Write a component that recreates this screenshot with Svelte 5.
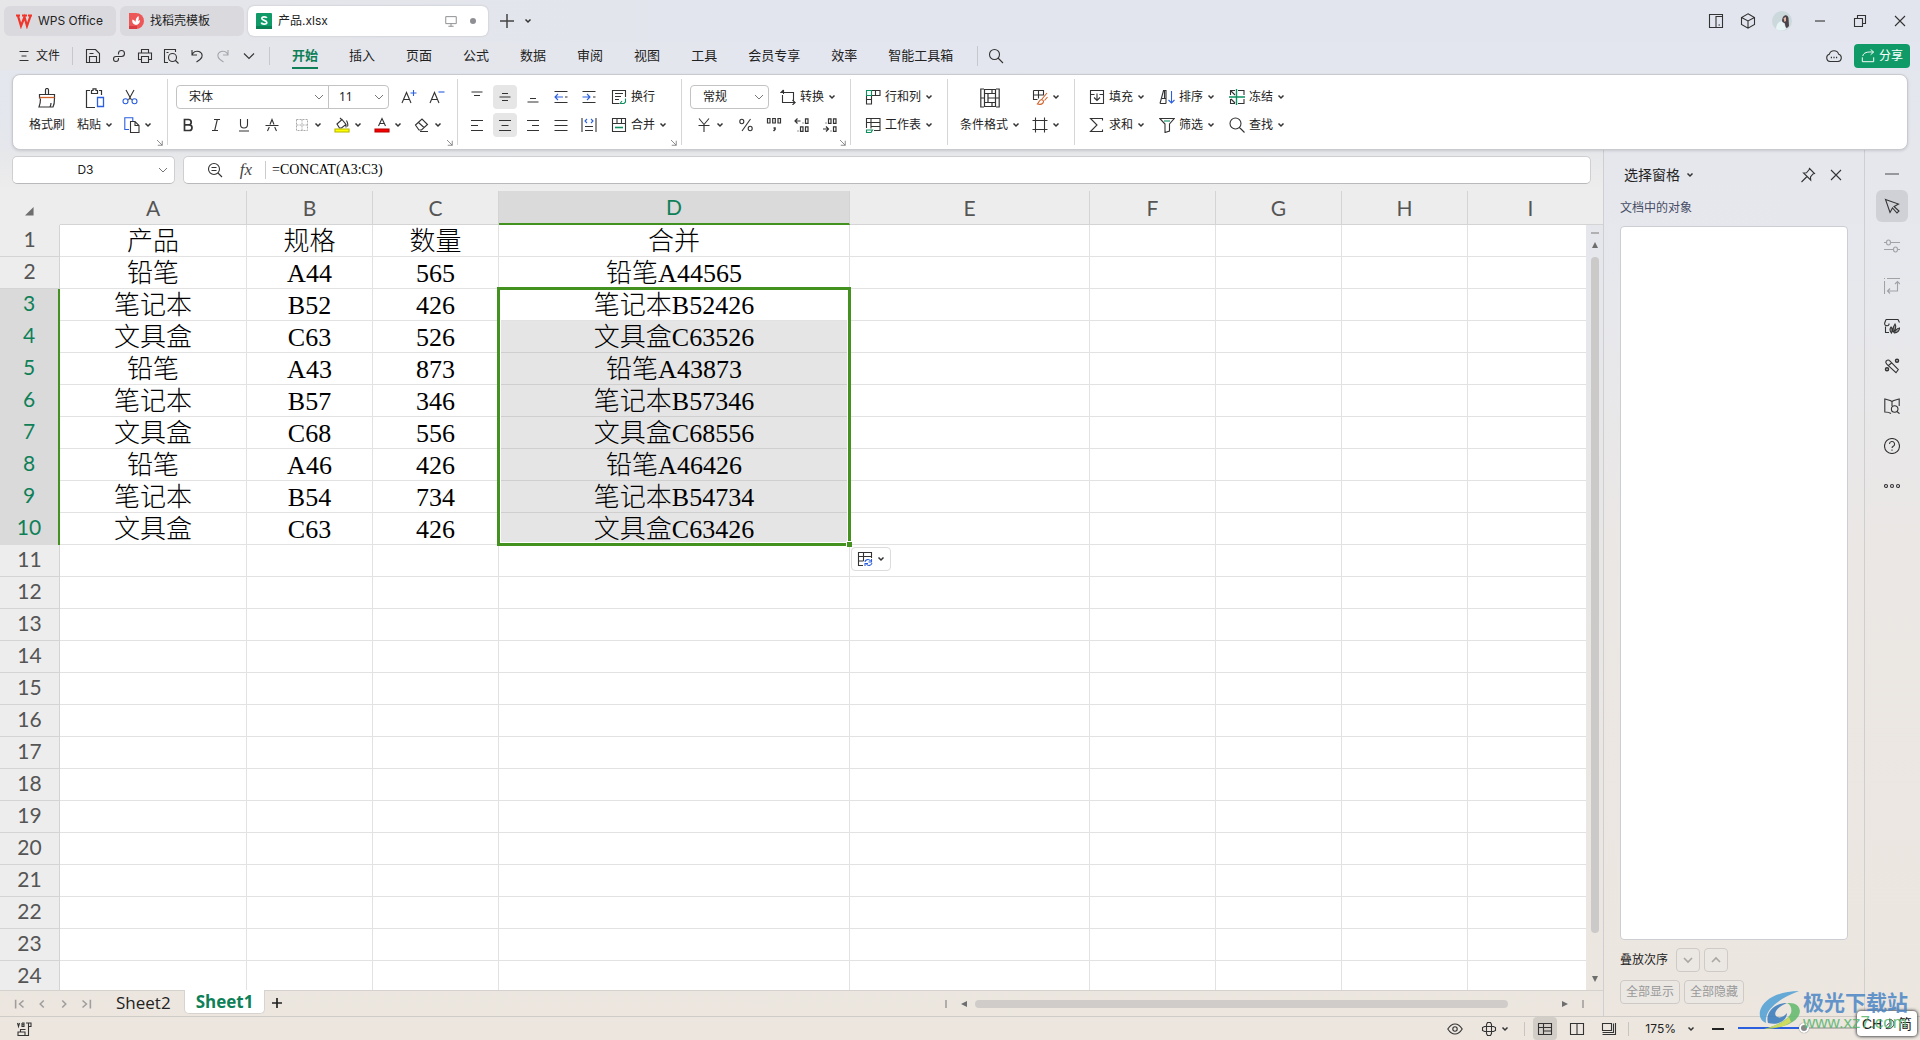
<script>
  // Each icon is a list of [path, stroke?, fill?, width?, dash?] drawn on a 16×16 grid.
  const B = '#2b5fe0';
  const G = '#0e8f5f';
  const O = '#d0622a';
  const icons = {
    menu: [['M3.5 3.5h9M5.5 8h5M3.5 12.5h9']],
    save: [['M1.5 1.5h9l4 4v9h-13zM4.5 14.5v-6h7v6M4.5 5.5h4']],
    link: [['M6 8.5h4.5a3 3 0 1 0-3-3v1M8.5 8.500H5a2.500 2.500 0 1 0 2.500 2.500V10']],
    print: [['M4.500 5V1.500h7V5M4.500 11.500h-3v-6.500h13v6.500h-3M4.500 8.500h7v6h-7z']],
    preview: [['M5 14.500H1.500v-13h11V4M3.500 4.500h2'], ['M13.500 9.500a4 4 0 1 1-8 0 4 4 0 0 1 8 0zM12.500 12.500l3 3']],
    undo: [['M3 2v5h5M3 7c1-3 4-4.500 7-3.500 4 1.500 4 6 1 8L7.500 14']],
    redo: [['M13 2v5H8M13 7c-1-3-4-4.500-7-3.500-4 1.500-4 6-1 8L8.500 14', '#a5a7ad']],
    more: [['M3 5.500l5 5 5-5']],
    search: [['M11.500 6.500a5 5 0 1 1-10 0 5 5 0 0 1 10 0zM10 10l5 5']],
    zoomout: [['M12.500 7a5.500 5.500 0 1 1-11 0 5.500 5.500 0 0 1 11 0zM11 11l4 4M4.500 5.500h5M4.500 8.500h5']],
    layout: [['M1.500 1.500h13v13h-13zM8 3.500h6.500v11H8zM10.500 12h1.500']],
    cube: [['M8 .8l6.500 3.700v7L8 15.200l-6.500-3.700v-7zM1.500 4.500L8 8l6.500-3.500M8 8v7']],
    min: [['M3 8h10']],
    restore: [['M2.500 5.500h8v8h-8zM5.500 5.500v-3h8v8h-3']],
    close: [['M3 3l10 10M13 3L3 13']],
    cloud: [['M4 13.500a3.700 3.700 0 0 1-.7-7.200 4.900 4.900 0 0 1 9.400 0A3.700 3.700 0 0 1 12 13.500z'], ['M4.800 9.500h1.200M7.400 9.500h1.200M10 9.500h1.200', '', '', 1.6]],
    share: [['M1.500 9.500v5h13v-5M2 8c1-4 5-5 12-4.500M11 .5l3.500 3-3.500 3', '#fff']],
    monitor: [['M2 3h12v8H2zM5 14h6M8 11v3', '#8b8c90']],
    cut: [['M4 1l5.500 10M12 1L6.500 11'], ['M6 12.300a2.500 2.500 0 1 1-5 0 2.500 2.500 0 0 1 5 0zM15 12.300a2.500 2.500 0 1 1-5 0 2.500 2.500 0 0 1 5 0z', B]],
    copy: [['M5 12.500H.8V.8h8V4', B], ['M6.500 4.500h4.500l4 4v7H6.500zM11 4.500v4h4']],
    incfont: [['M1 14L5.500 3.500 10 14M2.800 10.500h5.400'], ['M9.500 4h6M12.500 1v6', B]],
    decfont: [['M1 14L5.500 3.500 10 14M2.800 10.500h5.400'], ['M9.500 3h6', B]],
    bold: [['M4.500 2.500h4a2.700 2.700 0 0 1 0 5.400h-4zM4.500 7.900h4.700a2.800 2.800 0 0 1 0 5.600H4.500z', '', '', 1.7]],
    italic: [['M6 2.500h6M4 13.500h6M9.300 2.500L6.700 13.500']],
    underline: [['M4.500 2v5.500a3.500 3.500 0 0 0 7 0V2M3 14h10']],
    strike: [['M3.500 14l1.800-4M12.500 14L10.700 10M6 7.500L8 2.500l2 5M1.500 8.500h13']],
    borders: [['M2.500 2.500h11v11h-11zM8 2.500v11M2.500 8h11', '#aaa', '', 1, '2 1']],
    fill: [['M3 7l5-4.500 4 5-4.500 3.500h-2zM6 1l2 2M12.500 3.500c1 2 2 4 1 6M12 8v2.500'], ['M1 12h14v3H1z', '#b5b500', '#ffff00']],
    fontcolor: [['M4.500 9L8 1.500 11.500 9M5.700 6.500h4.600'], ['M1 12h14v3H1z', '#b80000', '#f40000']],
    eraser: [['M1.500 8L8 2l5.500 5.500-6 5.500H5zM4.500 5.500L10 10.500M6 14.500h8']],
    top: [['M2.500 3h11M5 6.500h6']],
    middle: [['M5 4.500h6M2.500 8h11M5 11.500h6']],
    bottom: [['M5 9.500h6M2.500 13h11']],
    left: [['M2 3.500h12M2 8.500h7M2 13.500h12']],
    center: [['M2 3.500h12M4.500 8.500h7M2 13.500h12']],
    right: [['M2 3.500h12M7 8.500h7M2 13.500h12']],
    justify: [['M1.500 3.500h13M1.500 8.500h13M1.500 13.500h13']],
    outdent: [['M1.500 2.500h13M1.500 13.500h13M12 8h2.500'], ['M10 8H2M5 5L2 8l3 3', B]],
    indent: [['M1.500 2.500h13M1.500 13.500h13M12 8h2.500'], ['M1.500 8H9M6 5l3 3-3 3', B]],
    distribute: [['M1 1v14M15 1v14M4 9.500h8M4 13.500h8'], ['M6 2L4 4l2 2M10 2l2 2-2 2', B]],
    wrap: [['M14.500 8V1.500h-13v13h7M4 4.500h8M4 7.500h6M4 10.500h4'], ['M14.500 9.500v3.500l-1.500 1.500h-4M11 12l-2 2.500', G]],
    merge: [['M1.500 1.500h13v13h-13zM1.500 6.500h13M6 1.500v5M10.500 1.500v5'], ['M4 10.500h8', G, '', 1.6]],
    convert: [['M3.500 1L1 3.500h12.500v8M3.500 1v4M2.500 6v7.500H15L12.500 11M12.500 16l2.500-2.500']],
    yen: [['M3 1.500l5 6 5-6M2.500 8.500h11M8 7.500V15']],
    percent: [['M12.500 2l-8.500 12'], ['M5.800 4.500a2 2.200 0 1 1-4 0 2 2.200 0 0 1 4 0zM14.200 11.500a2 2.200 0 1 1-4 0 2 2.200 0 0 1 4 0z']],
    thousands: [['M1.500 1.500h2.500v4.500H1.500zM6.700 1.500h2.600v4.500H6.700zM12 1.500h2.500v4.500H12z', '', '', 1.2], ['M7.500 11h1.500v1.500l-1.500 1.500', '', '', 1.5]],
    incdec: [['M6.500 4H1M3.500 1.500L1 4l2.500 2.500M8.500 6h1M11.500 1.800h2.500v4.500h-2.500zM3.500 14h1M6.500 9.800H9v4.500H6.500zM11.500 9.800H14v4.500h-2.500z', '', '', 1.2]],
    decdec: [['M1 12h5.500M4 9.500L6.500 12 4 14.500M8.500 14h1M11.500 9.800h2.500v4.500h-2.500zM3.500 6h1M6.500 1.800H9v4.500H6.500zM11.500 1.800H14v4.500h-2.500z', '', '', 1.2]],
    rowcol: [['M6.500 1.500h8.500v5H6.500M10.500 1.500v5M1.500 7v8h5V7M1.500 10.500h5'], ['M1.500 1.500h5v5h-5z', G]],
    worksheet: [['M1.500 11V1.500h13.500v12H9M1.500 5.500h13.500M6 1.500v10M6 9.500h9'], ['M1.500 13h6l-1.500 2.500h-4.500z', G]],
    cellstyle: [['M1.500 1.500h10v5M1.500 1.500v9h4M1.500 6h10M6.500 1.500v8'], ['M15 4l-5 6M15.500 8l-3 3.500M9.500 10.500c2 .5 2.500 2 1.500 3.500-1.500 1.500-4 1.500-5.500 1 1.500-1.500 1.500-4 4-4.500z', O]],
    frame: [['M3.500 .5v15M12.500 .5v15M.5 3.500h15M.5 12.500h15']],
    filldown: [['M1.500 1.500h13v13h-13zM1.500 5.500h4M10.500 5.500h4M8 4.500v7M5 8.500l3 3 3-3']],
    sort: [['M1 14.500L4.500 1.500h2.500v13M3 9.500h4M1 14.500h6M5.500 1.500v8'], ['M12.500 2v12M9.500 11l3 3 3-3', B]],
    freeze: [['M1.500 6V1.500H6M1.500 10v4.500H6M9 1.500h6V6M9 14.500h6V10M2 2l4 4M2 10l4 4'], ['M0 8h16M7.500 0v16', G, '', 1.4]],
    sum: [['M13.500 3.500v-2h-12L8 8l-6.500 6.500h12v-2']],
    filter: [['M.8 1.500h14.400L10.500 7v7l-4.500 1.500V7z'], ['M5 4h6', G]],
    find: [['M12 6.500a5.500 5.500 0 1 1-11 0 5.500 5.500 0 0 1 11 0zM10.500 10.500l5 5']],
    launcher: [['M4 4l7 7M11 5v6H5', '#777']],
    pin: [['M9.500 1.500l5 5-1.500 .5-2.500 3 .2 3L3.500 6l3-.2 2.500-3zM7 9.500l-5.500 5.500']],
    cursor: [['M1.500 1.500l13 4.500-4.500 2.500 5 4.500-2 2-4.500-5-2.500 4.500z']],
    sliders: [['M0 4.500h2.500M6.500 4.500H16M0 11.500h9.500M13.500 11.500H16M6.500 4.500a2 2.500 0 1 1-4 0 2 2.500 0 0 1 4 0zM13.500 11.500a2 2.500 0 1 1-4 0 2 2.500 0 0 1 4 0z', '#a0a2a7']],
    resize: [['M3 .5h13M.5 3v13M0 .5h1M13.500 3.500v9.500H4M11 6l2.500-2.500L16 6M6 10.500L3.500 13 6 15.500', '#a0a2a7']],
    shop: [['M5 14.500H1.500V8.500M2 1.500L.7 5C0 8 4 8.500 5 6.500v-1M2 1.500h12l1.500 3'], ['M7.500 15c-2-2-1.500-4.500-.5-6 1.500 1.500 1.500 4 .5 6zM8.800 13c0-3 1-5.500 2.200-7 1.200 2 .8 5-1.500 8zM10.500 15c.5-2.500 2.500-4.500 5-5 0 2.500-2 5-5 5z', '', '#9a9b9e']],
    wand: [['M1.800 4.500a2.200 2.200 0 0 1 4-1.500l8.500 8.500-2.300 3.200L3 6.500zM4.500 7.500l3-2.500'], ['M14.500 2.800a1.500 1.500 0 1 1-3 0 1.500 1.500 0 0 1 3 0zM4.500 11.200a1.500 1.500 0 1 1-3 0 1.500 1.500 0 0 1 3 0z', '', '', 1.5]],
    book: [['M8 3.500C6 2 4 2 .8 1v13C3 14 5 14 7 15.500M8 3.500C10 2 12 2 15.200 1v7M8 3.500V8'], ['M14 11a3.300 3.300 0 1 1-6.600 0 3.300 3.300 0 0 1 6.600 0zM13 13.500l2.500 2.200']],
    help: [['M15.500 8a7.500 7.500 0 1 1-15 0 7.500 7.500 0 0 1 15 0zM5.500 6a2.500 2.500 0 1 1 3.700 2.200C8.300 8.800 8 9 8 10M8 11.500v1.200']],
    dots: [['M3.500 8a1.500 1.500 0 1 1-3 0 1.500 1.500 0 0 1 3 0zM9.500 8a1.500 1.500 0 1 1-3 0 1.500 1.500 0 0 1 3 0zM15.500 8a1.500 1.500 0 1 1-3 0 1.500 1.500 0 0 1 3 0z']],
    macro: [['M1.500 2l1 3.500 1-3.500M6 2v3.500h2V2H6M6 3.700h2M10 2h5v3.500h-2.500M12.500 2v12.500H2V11h7v3M4.500 11V8.500h5']],
    eye: [['M.8 8C3 4.500 5.500 3 8 3s5 1.500 7.200 5c-2.200 3.500-4.700 5-7.200 5S3 11.500.8 8z'], ['M10.200 8a2.200 2.200 0 1 1-4.400 0 2.200 2.200 0 0 1 4.400 0z']],
    cross: [['M5.500 5.500h5v5h-5zM5.500 3.500l1-2h3l1 2v2M5.500 5.500v-2M5.500 10.500v2l1 2h3l1-2v-2M5.500 5.500h-2l-2 1v3l2 1h2M10.500 5.500h2l2 1v3l-2 1h-2']],
    normal: [['M1.500 2.500h13v11h-13zM1.500 6.500h13M6.500 2.500v11M6.500 10h8']],
    page: [['M1.500 2.500h13v11h-13zM8 2.500v11']],
    reading: [['M1.500 2.500h9v7h-9z'], ['M14.500 2v11.500H1.500M12.500 2.500v9h-11']],
    pasteopt: [['M6 14.500H1.500v-13h13V7M1.500 5.500h13M1.500 10h5M6.500 1.500V10'], ['M8 11c0-2.500 4-3.500 5.500-1M14.500 8v3h-3M15 12c-.5 2.500-4 3.500-5.500 1M8 15v-2.500h3', B]],
    first: [['M3 3v10M12 4L7.500 8l4.500 4', '#a09e9c', '', 1.8]],
    prev: [['M10 4L6 8l4 4', '#a09e9c', '', 1.8]],
    next: [['M6 4l4 4-4 4', '#a09e9c', '', 1.8]],
    last: [['M13 3v10M4 4l4.500 4L4 12', '#a09e9c', '', 1.8]],
    up: [['M4 10l4-4 4 4', '#a9a6a3', '', 1.6]],
    down: [['M4 6l4 4 4-4', '#a9a6a3', '', 1.6]]
  };

  const menus = ['开始', '插入', '页面', '公式', '数据', '审阅', '视图', '工具', '会员专享', '效率', '智能工具箱'];
  const quick = [['save', '保存'], ['link', '输出'], ['print', '打印'], ['preview', '打印预览'], ['undo', '撤销'], ['redo', '恢复'], ['more', '更多命令']];
  const cols = ['A', 'B', 'C', 'D', 'E', 'F', 'G', 'H', 'I'];
  const data = [
    ['产品', '规格', '数量', '合并'],
    ['铅笔', 'A44', '565', '铅笔A44565'],
    ['笔记本', 'B52', '426', '笔记本B52426'],
    ['文具盒', 'C63', '526', '文具盒C63526'],
    ['铅笔', 'A43', '873', '铅笔A43873'],
    ['笔记本', 'B57', '346', '笔记本B57346'],
    ['文具盒', 'C68', '556', '文具盒C68556'],
    ['铅笔', 'A46', '426', '铅笔A46426'],
    ['笔记本', 'B54', '734', '笔记本B54734'],
    ['文具盒', 'C63', '426', '文具盒C63426']
  ];
  const rows = Array.from({ length: 24 }, (_, i) => i + 1);
  const rail = [['sliders', '属性'], ['resize', '对象'], ['shop', '稻壳资源'], ['wand', '工具'], ['book', '查找'], ['help', '帮助'], ['dots', '更多']];
  const inRange = (n) => n >= 3 && n <= 10;
  let zoom = $state(43);
</script>

{#snippet icon(name)}
  <svg class="icon" viewBox="0 0 16 16" aria-hidden="true">
    {#each icons[name] as [d, stroke, fill, width, dash]}
      <path {d} stroke={stroke || 'currentColor'} fill={fill || 'none'} stroke-width={width || 1.1} stroke-dasharray={dash || null} />
    {/each}
  </svg>
{/snippet}

{#snippet chev()}
  <svg class="chev" viewBox="0 0 8 8" aria-hidden="true"><path d="M1.500 2.500L4 5l2.500-2.500" fill="none" stroke="currentColor" stroke-width="1.500" /></svg>
{/snippet}

{#snippet wide()}
  <svg class="wide" viewBox="0 0 10 8" aria-hidden="true"><path d="M1 2l4 4 4-4" fill="none" stroke="#777" /></svg>
{/snippet}

{#snippet tool(name, label, on = false)}
  <button class="tool" class:on aria-label={label}>{@render icon(name)}</button>
{/snippet}

{#snippet drop(name, label)}
  <button class="drop" aria-label={label}>{@render icon(name)}{@render chev()}</button>
{/snippet}

{#snippet labelled(name, label, menu = true)}
  <button class="labelled">{@render icon(name)}<span>{label}</span>{#if menu}{@render chev()}{/if}</button>
{/snippet}

{#snippet launcher()}
  <button class="launcher" aria-label="更多设置">{@render icon('launcher')}</button>
{/snippet}

<div class="app">
  <header class="title">
    <div class="tabs">
      <button class="tab home">
        <svg class="logo" viewBox="0 0 16 16" aria-hidden="true"><path d="M0 2.500h4M12 2.500h4M2 3l3 10L8.500 4l2.500 9L14.500 3M6 2.500h5" fill="none" stroke="#f0362b" stroke-width="2.200" /></svg>
        WPS Office
      </button>
      <button class="tab docer">
        <svg class="logo" viewBox="0 0 16 16" aria-hidden="true"><path d="M1 0h7a8 8 0 0 1 0 16H1z" fill="#ee5757" /><path d="M1 13h8v3H1z" fill="#d83d43" /><path d="M8 12C4 11 4 8 4.500 6.500 6 7 7 8 7.500 9 7.500 6.500 8.500 4 10.500 3c.5 2 .5 3.500-.5 5l2-1c0 3-1.500 4.500-4 5z" fill="#fff" /></svg>
        找稻壳模板
      </button>
      <div class="tab file">
        <svg class="logo" viewBox="0 0 16 16" aria-hidden="true"><rect width="16" height="16" rx="1" fill="#109a68" /><path d="M0 13h16v3H0z" fill="#0b8055" /><path d="M10.800 5c-.5-1.500-5-1.700-5 .5 0 2.300 5 1.500 5 4 0 2.200-5 2-5.400 0" fill="none" stroke="#fff" stroke-width="1.700" /></svg>
        <span class="grow">产品.xlsx</span>
        {@render icon('monitor')}
        <i class="dot"></i>
      </div>
      <button class="add" aria-label="新建"><svg viewBox="0 0 14 14" aria-hidden="true"><path d="M7 0v14M0 7h14" stroke="#444" stroke-width="1.500" /></svg></button>
      <button class="plain" aria-label="标签列表">{@render chev()}</button>
    </div>
    <div class="window">
      <button aria-label="分栏">{@render icon('layout')}</button>
      <button aria-label="应用">{@render icon('cube')}</button>
      <button class="user" aria-label="账户">
        <svg class="avatar" viewBox="0 0 20 20" aria-hidden="true"><circle cx="10" cy="10" r="10" fill="#cbd9dc" /><path d="M4 18c0-5 3-8 7-8l3 8c-3 2-7 2-10 0z" fill="#e8f3f5" /><path d="M11 6c2-3 5-2 5.500 1l.5 8-2 2c-1 0-2-2-2-4.500L10.500 11c-1-1 0-4 .5-5z" fill="#4a4248" /><path d="M11.500 7l2.500-1v4l-1.500 1z" fill="#e3b9a8" /></svg>
      </button>
      <button class="sys" aria-label="最小化">{@render icon('min')}</button>
      <button class="sys" aria-label="还原">{@render icon('restore')}</button>
      <button class="sys" aria-label="关闭">{@render icon('close')}</button>
    </div>
  </header>

  <nav class="menubar">
    <button class="filemenu">{@render icon('menu')}文件</button>
    <div class="quick">
      {#each quick as [name, label]}
        <button aria-label={label}>{@render icon(name)}</button>
      {/each}
    </div>
    <div class="menus">
      {#each menus as m, i}
        <button class:active={i === 0}>{m}</button>
      {/each}
    </div>
    <button class="find" aria-label="搜索">{@render icon('search')}</button>
    <button class="cloud" aria-label="云同步">{@render icon('cloud')}</button>
    <button class="share">{@render icon('share')}分享</button>
  </nav>

  <section class="ribbon" aria-label="开始">
    <div class="group clip">
      <button class="big">
        <svg class="large" viewBox="0 0 20 20" aria-hidden="true"><path d="M8.500 6.500V2a1.500 1.500 0 0 1 3 0v4.500M2.500 10.500v-4h15v4M3.500 10.500c0 3-.5 6-1.500 8.500h14c1-2 1.500-5 1.500-8.500M13 19c.5-1 1-2 1-4" fill="none" stroke="#333" stroke-width="1.200" /><path d="M2.500 9.500h15" stroke="#d0622a" stroke-width="1.300" /></svg>
        <span>格式刷</span>
      </button>
      <button class="big">
        <svg class="large" viewBox="0 0 20 20" aria-hidden="true"><path d="M5 2.500H1.500v17H10M14 2.500h2.500V7M6.500 5.500V2.500H8V.8h3v1.700h1.500v3z" fill="none" stroke="#333" stroke-width="1.200" /><path d="M12.500 9.500h6v9h-6z" fill="none" stroke="#2b5fe0" stroke-width="1.300" /></svg>
        <span>粘贴{@render chev()}</span>
      </button>
      <div class="stack">
        <div class="line">{@render tool('cut', '剪切')}</div>
        <div class="line">{@render drop('copy', '复制')}</div>
      </div>
      {@render launcher()}
    </div>

    <div class="group font">
      <div class="stack">
        <div class="line">
          <div class="combo family"><select aria-label="字体"><option>宋体</option></select>{@render wide()}</div>
          <div class="combo size"><select aria-label="字号"><option>11</option></select>{@render wide()}</div>
          {@render tool('incfont', '增大字号')}{@render tool('decfont', '减小字号')}
        </div>
        <div class="line">
          {@render tool('bold', '加粗')}{@render tool('italic', '倾斜')}{@render tool('underline', '下划线')}{@render tool('strike', '删除线')}
          {@render drop('borders', '边框')}{@render drop('fill', '填充颜色')}{@render drop('fontcolor', '字体颜色')}{@render drop('eraser', '清除')}
        </div>
      </div>
      {@render launcher()}
    </div>

    <div class="group align">
      <div class="stack">
        <div class="line">
          {@render tool('top', '顶端对齐')}{@render tool('middle', '垂直居中', true)}{@render tool('bottom', '底端对齐')}{@render tool('outdent', '减少缩进')}{@render tool('indent', '增加缩进')}
          {@render labelled('wrap', '换行', false)}
        </div>
        <div class="line">
          {@render tool('left', '左对齐')}{@render tool('center', '水平居中', true)}{@render tool('right', '右对齐')}{@render tool('justify', '两端对齐')}{@render tool('distribute', '分散对齐')}
          {@render labelled('merge', '合并')}
        </div>
      </div>
      {@render launcher()}
    </div>

    <div class="group number">
      <div class="stack">
        <div class="line">
          <div class="combo format"><select aria-label="数字格式"><option>常规</option></select>{@render wide()}</div>
          {@render labelled('convert', '转换')}
        </div>
        <div class="line">
          {@render drop('yen', '货币')}
          <div class="digits">{@render tool('percent', '百分比')}{@render tool('thousands', '千位分隔')}{@render tool('incdec', '增加小数位')}{@render tool('decdec', '减少小数位')}</div>
        </div>
      </div>
      {@render launcher()}
    </div>

    <div class="group sheetops">
      <div class="stack">
        <div class="line">{@render labelled('rowcol', '行和列')}</div>
        <div class="line">{@render labelled('worksheet', '工作表')}</div>
      </div>
    </div>

    <div class="group style">
      <button class="big">
        <svg class="large" viewBox="0 0 20 20" aria-hidden="true"><path d="M4 1H.8v18H4M16 1h3.200v18H16M4.500 1v18M15.500 1v18M4.500 1.500h11M4.500 18.500h11M4.500 5.500h11M4.500 14.500h11M8 10h7.500M.8 10h3.700M15.500 10h3.700M8 5.500v9M12 1.500v4M12 14.500v4" fill="none" stroke="#333" stroke-width="1.200" /></svg>
        <span>条件格式{@render chev()}</span>
      </button>
      <div class="stack">
        <div class="line">{@render drop('cellstyle', '单元格样式')}</div>
        <div class="line">{@render drop('frame', '表格样式')}</div>
      </div>
    </div>

    <div class="group edit">
      <div class="stack">
        <div class="line">{@render labelled('filldown', '填充')}{@render labelled('sort', '排序')}{@render labelled('freeze', '冻结')}</div>
        <div class="line">{@render labelled('sum', '求和')}{@render labelled('filter', '筛选')}{@render labelled('find', '查找')}</div>
      </div>
    </div>
  </section>

  <main>
    <section class="work">
      <div class="formulabar">
        <div class="namebox"><input aria-label="名称框" value="D3" />{@render wide()}</div>
        <div class="formula">
          <button aria-label="浏览公式">{@render icon('zoomout')}</button>
          <button class="fx" aria-label="插入函数">fx</button>
          <input aria-label="编辑栏" value="=CONCAT(A3:C3)" />
        </div>
      </div>

      <div class="sheet">
        <div class="viewport">
          <table>
            <colgroup>
              <col class="w-head" />
              {#each cols as c}<col class="w-{c}" />{/each}
            </colgroup>
            <thead>
              <tr>
                <th class="corner" aria-label="全选"><svg viewBox="0 0 10 10" aria-hidden="true"><path d="M9.500 0v9.500H0z" fill="#6e6e6e" /></svg></th>
                {#each cols as c}<th class:hot={c === 'D'} scope="col">{c}</th>{/each}
              </tr>
            </thead>
            <tbody>
              {#each rows as n}
                <tr>
                  <th scope="row" class:hot={inRange(n)}>{n}</th>
                  {#each cols as c, i}
                    <td class:picked={c === 'D' && n > 3 && n <= 10} class:anchor={c === 'D' && n === 3}>
                      {data[n - 1]?.[i] ?? ''}
                      {#if c === 'D' && n === 3}
                        <span class="selection">
                          <button class="pasteopt" aria-label="粘贴选项">{@render icon('pasteopt')}{@render chev()}</button>
                        </span>
                      {/if}
                    </td>
                  {/each}
                </tr>
              {/each}
            </tbody>
          </table>
        </div>
        <div class="vscroll">
          <i class="split"></i>
          <svg viewBox="0 0 6 6" aria-hidden="true"><path d="M3 0l3 6H0z" fill="#6e6e6e" /></svg>
          <div class="vtrack"><i></i></div>
          <svg viewBox="0 0 6 6" aria-hidden="true"><path d="M3 6l3-6H0z" fill="#6e6e6e" /></svg>
        </div>
      </div>

      <div class="sheettabs">
        <div class="pager">
          <button aria-label="第一个">{@render icon('first')}</button>
          <button aria-label="上一个">{@render icon('prev')}</button>
          <button aria-label="下一个">{@render icon('next')}</button>
          <button aria-label="最后一个">{@render icon('last')}</button>
        </div>
        <button class="sheettab">Sheet2</button>
        <button class="sheettab current">Sheet1</button>
        <button class="newsheet" aria-label="新建工作表"><svg viewBox="0 0 10 10" aria-hidden="true"><path d="M5 0v10M0 5h10" stroke="#222" stroke-width="1.700" /></svg></button>
        <div class="hscroll">
          <i class="grip"></i>
          <svg viewBox="0 0 6 6" aria-hidden="true"><path d="M0 3l6-3v6z" fill="#6e6e6e" /></svg>
          <div class="htrack"><i></i></div>
          <svg viewBox="0 0 6 6" aria-hidden="true"><path d="M6 3L0 0v6z" fill="#6e6e6e" /></svg>
          <i class="grip"></i>
        </div>
      </div>
    </section>

    <aside class="panel">
      <div class="panelhead">
        <button class="paneltitle">选择窗格{@render chev()}</button>
        <button aria-label="固定">{@render icon('pin')}</button>
        <button aria-label="关闭窗格">{@render icon('close')}</button>
      </div>
      <p>文档中的对象</p>
      <div class="objects"></div>
      <div class="order">
        <span>叠放次序</span>
        <button aria-label="下移">{@render icon('down')}</button>
        <button aria-label="上移">{@render icon('up')}</button>
      </div>
      <div class="order">
        <button class="text">全部显示</button>
        <button class="text">全部隐藏</button>
      </div>
    </aside>

    <aside class="rail">
      <i></i>
      <button class="on" aria-label="选择">{@render icon('cursor')}</button>
      {#each rail as [name, label]}
        <button aria-label={label}>{@render icon(name)}</button>
      {/each}
    </aside>
  </main>

  <footer class="status">
    <button class="macro" aria-label="宏">{@render icon('macro')}</button>
    <button class="view" aria-label="护眼模式">{@render icon('eye')}</button>
    <button class="drop" aria-label="阅读模式">{@render icon('cross')}{@render chev()}</button>
    <i class="bar"></i>
    <button class="view on" aria-label="普通视图">{@render icon('normal')}</button>
    <button class="view" aria-label="分页预览">{@render icon('page')}</button>
    <button class="view" aria-label="阅读版式">{@render icon('reading')}</button>
    <i class="bar"></i>
    <button class="percent">175%{@render chev()}</button>
    <button class="minus" aria-label="缩小"><i></i></button>
    <input class="zoom" type="range" aria-label="缩放" min="0" max="100" bind:value={zoom} />
  </footer>

  <div class="ime">
    <span>CH</span>
    <svg viewBox="0 0 12 14" aria-hidden="true"><path d="M5 1c5 1 7 5 5 8-2 4-7 4-9 3 4 0 7-4 4-11zM2 9l3-3" fill="none" stroke="#222" stroke-width="1.200" /></svg>
    <span>简</span>
  </div>
  <div class="mark">
    <svg viewBox="0 0 44 40" aria-hidden="true">
      <path d="M40 1C20 1 4 9 1 21c-1 6 1 10 6 12-2-13 12-24 33-32z" fill="#4e9fd6" />
      <path d="M9 33c-3-10 6-20 19-20-8 3-14 9-11 13 3 3 8 1 11-3 0 7-8 13-19 10z" fill="#3579bd" />
      <path d="M28 13c10-1 15 5 12 12C36 34 22 38 5 39c14-4 24-9 27-16 1-4 0-8-4-10z" fill="#5fb96a" />
      <path d="M5 39c12-3 20-7 25-12l2 5c-7 5-16 7-27 7z" fill="#c9d84a" />
    </svg>
    <div><b>极光下载站</b><em>www.xz7.com</em></div>
  </div>
</div>

<style>
  :global(body) { margin: 0; }
  .app {
    --ink: #333;
    --green: #0e8058;
    position: relative;
    display: flex;
    flex-direction: column;
    height: 100vh;
    overflow: hidden;
    color: #222;
    font: 12px/16px "Noto Sans", "Noto Sans CJK SC", sans-serif;
    background: linear-gradient(to bottom, #e3e6ee 0, #e7e8ec 30%, #ebe7e4 56%, #ece6df 100%);
  }
  button, input, select {
    font: inherit;
    color: inherit;
    background: none;
    border: 0;
    padding: 0;
    margin: 0;
    outline: 0;
    border-radius: 0;
  }
  button {
    display: flex;
    align-items: center;
    justify-content: center;
    flex: none;
    white-space: nowrap;
  }
  select { appearance: none; }
  input { min-width: 0; }
  .icon { width: 16px; height: 16px; flex: none; color: var(--ink); }
  .chev { width: 8px; height: 8px; flex: none; color: #333; }
  .wide { width: 10px; height: 8px; flex: none; }

  /* Title bar */
  .title { display: flex; justify-content: space-between; height: 42px; flex: none; font-family: Inter, "Noto Sans CJK SC", sans-serif; background: linear-gradient(to right, #e6e6e9, #e2e5ee 40%); }
  .tabs { display: flex; align-items: center; gap: 4px; padding-left: 4px; }
  .tab {
    display: flex;
    align-items: center;
    justify-content: flex-start;
    box-sizing: border-box;
    height: 30px;
    gap: 6px;
    padding: 0 8px;
    border-radius: 6px;
    background: #dadade;
  }
  .home { width: 112px; padding-left: 12px; }
  .docer { width: 124px; }
  .file { width: 240px; background: #fff; box-shadow: 0 0 2px #b5b6bc; }
  .logo { width: 16px; height: 16px; flex: none; }
  .grow { flex: 1; }
  .file .icon { width: 14px; height: 14px; }
  .dot { width: 6px; height: 6px; margin: 0 4px 0 6px; border-radius: 50%; background: #8e8f93; }
  .add { width: 30px; height: 28px; }
  .add svg { width: 14px; height: 14px; }
  .plain { margin-left: -2px; }
  .window { display: flex; align-items: center; }
  .window button { width: 32px; height: 32px; }
  .window .user { width: 36px; }
  .window .sys { width: 40px; }
  .avatar { width: 20px; height: 20px; }

  /* Menu bar */
  .menubar { display: flex; align-items: center; height: 28px; flex: none; padding-right: 10px; background: linear-gradient(to right, #e6e6e9, #e3e6ee 40%); }
  .filemenu { gap: 4px; margin-left: 16px; }
  .quick { display: flex; gap: 10px; margin-left: 12px; padding: 0 12px; border: solid #c6c8ce; border-width: 0 1px; }
  .quick button { height: 18px; }
  .menus { display: flex; gap: 31px; margin-left: 22px; padding-right: 24px; font-size: 13px; }
  .menus button { height: 26px; border-bottom: 2px solid transparent; }
  .menus .active { font-weight: 700; color: var(--green); border-color: var(--green); }
  .find { padding-left: 10px; height: 20px; border-left: 1px solid #c6c8ce; }
  .cloud { margin-left: auto; }
  .share { width: 56px; height: 24px; gap: 4px; margin-left: 12px; border-radius: 4px; color: #fff; background: #109a68; }
  .share .icon { width: 14px; height: 14px; }

  /* Ribbon */
  .ribbon {
    display: flex;
    box-sizing: border-box;
    height: 76px;
    flex: none;
    margin: 4px 12px 0;
    border: 1px solid #c9cacf;
    border-radius: 8px;
    background: #fff;
    box-shadow: 0 1px 3px #0002;
    position: relative;
    z-index: 1;
  }
  .group { display: flex; position: relative; box-sizing: border-box; margin: 4px 0; padding-top: 6px; border-right: 1px solid #d6d6d6; }
  .group:last-child { border: 0; }
  .clip { width: 155px; padding-left: 13px; }
  .font { width: 290px; padding-left: 6px; }
  .align { width: 224px; padding-left: 5px; }
  .number { width: 169px; padding-left: 6px; }
  .sheetops { width: 97px; padding-left: 6px; }
  .style { width: 127px; padding-left: 12px; }
  .edit { padding-left: 6px; }
  .stack { display: flex; flex-direction: column; gap: 4px; }
  .line { display: flex; height: 24px; }
  .big { flex-direction: column; justify-content: space-between; height: 52px; box-sizing: border-box; padding: 3px 0 4px; }
  .big span { display: flex; align-items: center; gap: 4px; }
  .clip .big { width: 42px; }
  .clip .big + .big { width: 46px; margin-left: 4px; }
  .style .big { width: 60px; margin-right: 4px; }
  .large { width: 20px; height: 20px; }
  .tool { width: 24px; height: 24px; margin: 0 2px; border-radius: 4px; }
  .tool.on { background: #e6e6e6; }
  .drop { width: 40px; gap: 4px; justify-content: flex-start; box-sizing: border-box; padding-left: 8px; }
  .clip .tool { margin: 0; }
  .clip .drop { padding-left: 6px; }
  .labelled { gap: 4px; padding: 0 6px 0 8px; }
  .launcher { position: absolute; right: 1px; bottom: -4px; }
  .launcher .icon { width: 12px; height: 12px; }
  .combo { display: flex; align-items: center; box-sizing: border-box; height: 24px; padding-right: 4px; border: 1px solid #c3c3c3; }
  .combo select { flex: 1; min-width: 0; padding-left: 12px; }
  .family { width: 153px; margin-left: 2px; border-radius: 4px 0 0 4px; }
  .size { width: 61px; margin: 0 6px 0 -1px; border-radius: 0 4px 4px 0; }
  .size select { padding-left: 10px; }
  .format { width: 79px; margin: 0 3px 0 2px; border-radius: 4px; }
  .digits { display: flex; margin-left: 4px; }

  /* Work area */
  main { display: flex; flex: 1; min-height: 0; }
  .work { display: flex; flex-direction: column; flex: 1; min-width: 0; border-right: 1px solid #cfcfd1; }
  .formulabar { display: flex; gap: 8px; flex: none; padding: 6px 12px 7px; background: linear-gradient(#e6e7ea, #ededed); }
  .namebox, .formula { display: flex; align-items: center; box-sizing: border-box; height: 28px; border: 1px solid #cfcfd2; border-bottom-color: #b9b9bb; border-radius: 5px; background: #fff; }
  .namebox { width: 163px; padding-right: 6px; font-family: Inter, sans-serif; }
  .namebox input { flex: 1; text-align: center; }
  .formula { flex: 1; padding-left: 23px; }
  .fx { width: 30px; margin: 0 4px 0 8px; font: italic 17px/20px "Liberation Serif", serif; color: #444; }
  .formula input { flex: 1; padding-left: 6px; border-left: 1px solid #ccc; font: 14px/18px "Liberation Serif", serif; color: #000; }

  .sheet { display: flex; flex: 1; min-height: 0; background: #ededed; }
  .viewport { flex: 1; min-width: 0; overflow: hidden; }
  table { width: calc(100% + 8px); table-layout: fixed; border-spacing: 0; background: #fff; }
  .w-head { width: 60px; }
  .w-A { width: 187px; }
  .w-B, .w-C, .w-F, .w-G, .w-H { width: 126px; }
  .w-D { width: 351px; }
  .w-E { width: 240px; }
  th, td { box-sizing: border-box; height: 32px; padding: 0; text-align: center; border: solid #e2e2e2; border-width: 0 1px 1px 0; }
  th { font: 21px/24px Lato, sans-serif; color: #555; background: #ededed; border-color: #d4d4d4; }
  tbody th { padding-bottom: 4px; }
  thead th { height: 34px; }
  thead .corner { border-color: #ededed; }
  .corner svg { width: 9px; height: 9px; }
  .hot { color: var(--green); background: #dadada; }
  thead .hot { border-bottom: 2px solid #43911f; }
  tbody .hot { border-right: 2px solid #43911f; border-bottom: 0; }
  td { padding-top: 3px; font: 26px/28px "Liberation Serif", "Noto Sans CJK SC", serif; font-weight: 300; color: #000; }
  .picked { background: #e5e5e5; border-bottom-color: #cfcfcf; }
  .anchor { position: relative; }
  .selection { position: absolute; z-index: 1; left: -2px; top: -2px; width: calc(100% - 2px); height: 253px; border: 3px solid #43911f; box-shadow: inset 0 0 0 1px #fff; }
  .selection::after { content: ""; position: absolute; right: -4px; bottom: -4px; width: 5px; height: 5px; background: #43911f; border: solid #fff; border-width: 1px 0 0 1px; }
  .pasteopt { position: absolute; left: calc(100% + 3px); top: calc(100% + 4px); width: 40px; height: 24px; gap: 4px; box-sizing: border-box; border: 1px solid #dcdcdc; border-radius: 4px; background: #fff; }

  .vscroll { display: flex; flex-direction: column; align-items: center; box-sizing: border-box; width: 17px; margin-top: 33px; padding: 7px 0 8px; border-top: 1px solid #d4d4d4; background: linear-gradient(#e5e7ed, #e9e7e5 50%, #ece6e0); }
  .vscroll svg, .hscroll svg { width: 6px; height: 6px; flex: none; }
  .split { width: 8px; height: 2px; margin-bottom: 8px; background: #b0b0b2; }
  .vtrack { flex: 1; padding: 9px 0 0; }
  .vtrack i { display: block; width: 8px; height: 94%; border-radius: 4px; background: #cbcac9; }

  .sheettabs { display: flex; flex: none; height: 25px; border-top: 1px solid #d4d1ce; font: 17px/22px "Open Sans", sans-serif; }
  .pager { display: flex; align-items: center; gap: 6px; padding: 0 12px; }
  .pager .icon { width: 14px; height: 14px; }
  .pager button { width: 16px; }
  .sheettab { height: 24px; padding: 0 11px; }
  .sheettab:not(.current) { padding: 0 13px 0 8px; margin-left: 2px; }
  .current { margin-top: -1px; font-weight: 700; color: var(--green); border: 1px solid #d8d3ce; border-top: 0; border-radius: 0 0 5px 5px; background: #fff; }
  .newsheet { width: 24px; height: 24px; }
  .newsheet svg { width: 10px; height: 10px; }
  .hscroll { display: flex; align-items: center; gap: 14px; width: 639px; margin-left: auto; margin-right: 19px; }
  .grip { width: 2px; height: 8px; background: #b0adab; }
  .htrack { flex: 1; margin: 0 0 0 -6px; }
  .htrack i { display: block; width: 93%; height: 8px; border-radius: 4px; background: #d0ccc9; }

  /* Selection panel */
  .panel { display: flex; flex-direction: column; box-sizing: border-box; width: 261px; flex: none; padding: 12px 16px; border-right: 1px solid #cfcfd1; }
  .panelhead { display: flex; align-items: center; gap: 12px; height: 26px; padding: 0 4px; }
  .panelhead .paneltitle { gap: 6px; margin-right: auto; font-size: 14px; line-height: 20px; }
  .panel p { margin: 12px 0 10px; color: #474d66; }
  .objects { flex: 1; border: 1px solid #cdced4; border-radius: 4px; background: #fff; }
  .order { display: flex; align-items: center; gap: 4px; margin-top: 8px; }
  .order span { margin-right: 4px; }
  .order button { box-sizing: border-box; width: 24px; height: 24px; border: 1px solid #cfcac5; border-radius: 4px; background: #ebe8e4; color: #999; }
  .order .text { width: 60px; }

  .rail { display: flex; flex-direction: column; align-items: center; gap: 8px; box-sizing: border-box; width: 55px; flex: none; padding: 23px 1px 0 0; }
  .rail i { width: 14px; height: 2px; margin-bottom: 7px; background: #97989c; }
  .rail button { width: 32px; height: 32px; border-radius: 6px; }
  .rail .on { background: #d0d1d6; }

  /* Status bar */
  .status { display: flex; flex: none; box-sizing: border-box; height: 24px; border-top: 1px solid #cfcbc7; padding-right: 30px; font-family: Inter, sans-serif; }
  .macro { margin: 0 auto 0 16px; }
  .view { width: 24px; margin: 0 4px; border-radius: 4px; }
  .view.on { background: #d3cdc8; }
  .bar { width: 1px; height: 14px; margin: 5px 4px 0 3px; background: #c9c4c0; }
  .status .drop { width: 44px; margin-left: 6px; padding-left: 4px; }
  .percent { gap: 11px; margin-left: 12px; }
  .minus { width: 34px; margin-left: 6px; }
  .minus i { width: 12px; height: 2px; background: #222; }
  .zoom { appearance: none; width: 152px; height: 22px; margin-left: 3px; }
  .zoom::-webkit-slider-runnable-track { height: 2px; background: linear-gradient(to right, #2b5fe0 43%, #bbb8b4 43%); }
  .zoom::-webkit-slider-thumb { appearance: none; width: 10px; height: 10px; margin-top: -4px; border-radius: 50%; border: 2px solid #fff; background: #888; box-shadow: 0 0 1px #555; }

  /* Floating input indicator and site mark */
  .ime { position: absolute; right: 3px; bottom: 4px; display: flex; align-items: center; justify-content: center; gap: 3px; width: 60px; height: 25px; border-radius: 4px; background: #fff; box-shadow: 0 0 3px 1px #555; font: 14px/18px "Liberation Sans", "Noto Sans CJK SC", sans-serif; }
  .ime svg { width: 10px; height: 12px; }
  .mark { position: absolute; right: 10px; bottom: 7px; display: flex; align-items: flex-start; opacity: .85; }
  .mark svg { width: 44px; height: 42px; }
  .mark div { width: 107px; }
  .mark b { display: block; font: 700 21px/24px "Noto Sans CJK SC", sans-serif; color: #4b86c6; white-space: nowrap; }
  .mark em { display: block; font: 400 17px/20px "Liberation Sans", sans-serif; color: #56b46b; }
</style>
